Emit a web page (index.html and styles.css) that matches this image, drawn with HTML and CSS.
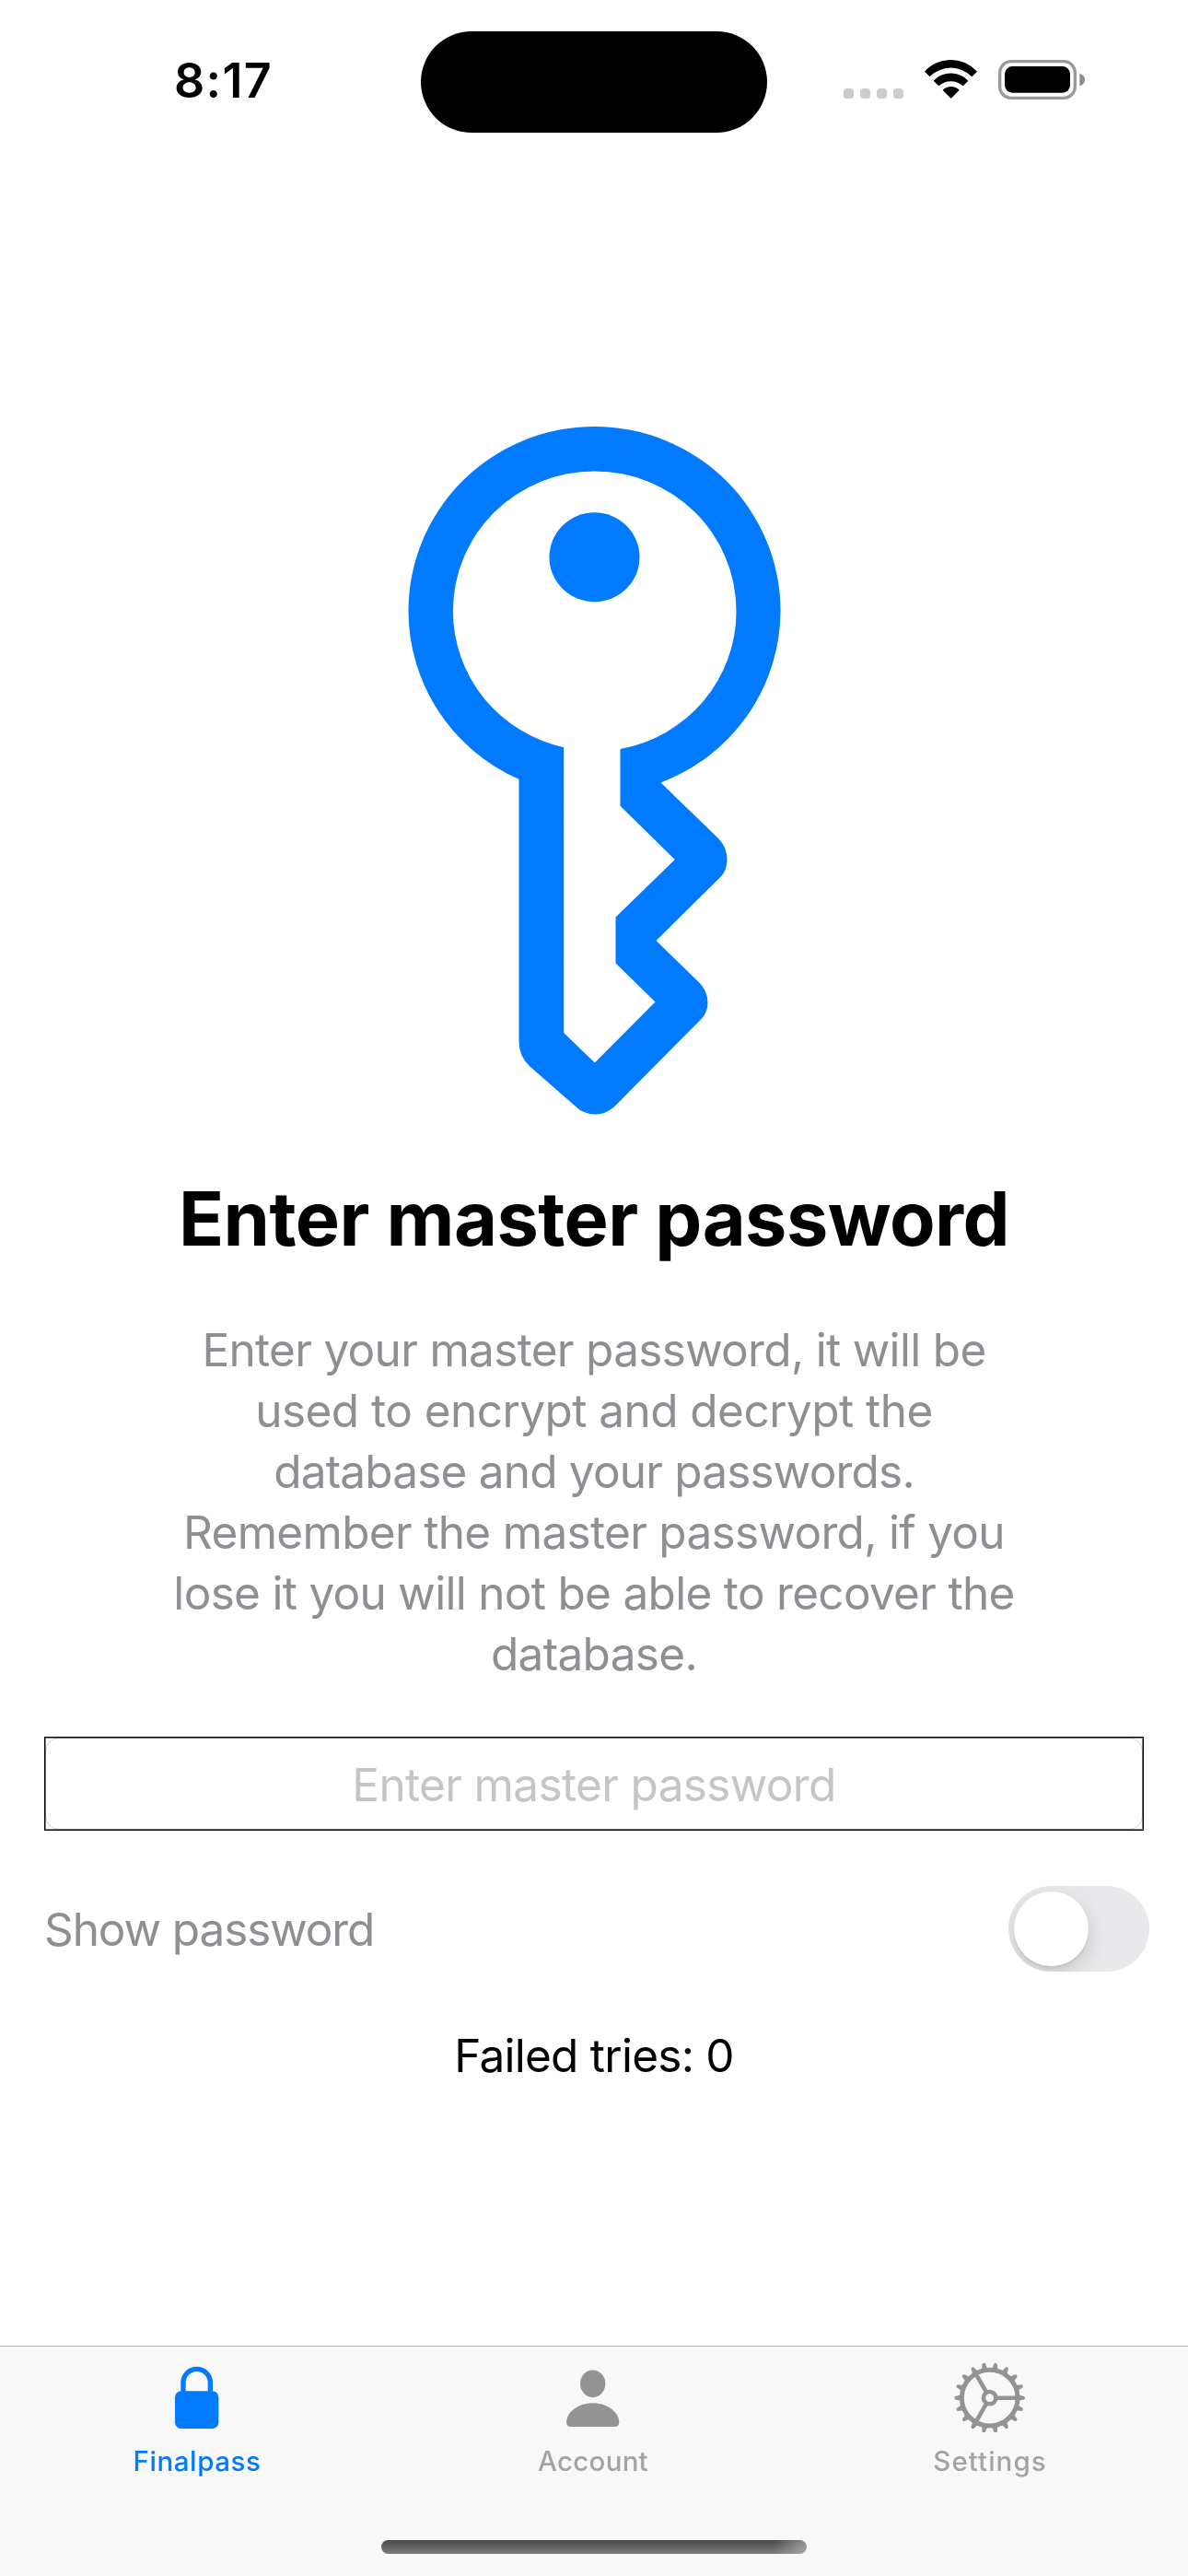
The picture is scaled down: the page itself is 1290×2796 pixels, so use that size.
FILE: index.html
```
<!DOCTYPE html>
<html lang="en">
<head>
<meta charset="utf-8">
<title>Finalpass</title>
<link rel="stylesheet" href="styles.css">
</head>
<body>
<header class="status">
  <div class="status-time">8:17</div>
  <div class="island"></div>
  <div class="status-icons">
    <div class="signal"><i></i><i></i><i></i><i></i></div>
    <svg class="wifi" viewBox="372 75 171 129">
      <path d="M372 113A115 115 0 0 1 543 113L526 130A95 95 0 0 0 389 130Z"/>
      <path d="M401 143A77 77 0 0 1 514 143L497 160A58 58 0 0 0 418 160Z"/>
      <path d="M431 173A38 38 0 0 1 485 173L458 201Z"/>
    </svg>
    <svg class="battery" viewBox="612 75 285 129">
      <rect class="battery-shell" x="617" y="80" width="245" height="119" rx="37"/>
      <rect x="633" y="96" width="213" height="86" rx="25"/>
      <path class="battery-nub" d="M877 119C900 126 900 153 877 160Z"/>
    </svg>
  </div>
</header>

<main class="content">
  <svg class="key" viewBox="442.5 463 405 748">
    <path d="M563 845.8A202 200 0 0 1 443 663A202 200 0 0 1 645 463A202 200 0 0 1 847 663A202 200 0 0 1 717 849.5L780 910.4Q789 920 789 933Q789 944 782.7 951L712 1021L758.7 1066.5Q768 1076 768 1088.5Q768 1099 760 1107L666 1201.7Q657 1209.4 646 1209.4Q633 1209.4 624.3 1200.7L574 1156.8Q563 1146 563 1130ZM611.7 811.2V1121L645.3 1153.5L711 1087.4L668 1045.6V995.6L732.3 932.9L673 874.7V813A153.8 151.6 0 0 0 799 663A153.8 151.6 0 0 0 645.2 511.4A153.8 151.6 0 0 0 491.4 663A153.8 151.6 0 0 0 611.7 811.2Z"/>
    <ellipse cx="645" cy="604.8" rx="49" ry="48.5"/>
  </svg>
  <h1 class="title">Enter master password</h1>
  <p class="lead">
    <span>Enter your master password, it will be</span>
    <span class="line-loose">used to encrypt and decrypt the</span>
    <span class="line-tight">database and your passwords.</span>
    <span>Remember the master password, if you</span>
    <span class="line-snug">lose it you will not be able to recover the</span>
    <span>database.</span>
  </p>
  <div class="field"><div class="field-inner">Enter master password</div></div>
  <div class="option">
    <span class="option-label">Show password</span>
    <div class="switch"><div class="knob"></div></div>
  </div>
  <p class="tries">Failed tries: 0</p>
</main>

<footer class="bar">
  <nav class="tabs">
    <div class="tab active">
      <svg viewBox="165 90 240 240">
        <rect x="210" y="196" width="142" height="122" rx="20"/>
        <path class="shackle" d="M237 204V168a44 44 0 0 1 88 0V204"/>
      </svg>
      <span class="name-pass">Finalpass</span>
    </div>
    <div class="tab">
      <svg viewBox="135 90 240 240">
        <ellipse cx="251" cy="172" rx="41" ry="44.500"/>
        <path d="M180 312Q165 312 165 297C167 262 206 235 251 235S335 262 337 297Q337 312 322 312Z"/>
      </svg>
      <span class="name-account">Account</span>
    </div>
    <div class="tab">
      <svg viewBox="165 90 240 240">
        <defs>
          <path id="tooth" d="M374 204C381 209 384 211 394 212Q399 213 399 218Q399 223 394 224C384 225 381 227 374 232Z"/>
          <g id="teeth">
            <use href="#tooth"/>
            <use href="#tooth" transform="rotate(20 284 218)"/>
            <use href="#tooth" transform="rotate(40 284 218)"/>
            <use href="#tooth" transform="rotate(60 284 218)"/>
            <use href="#tooth" transform="rotate(80 284 218)"/>
            <use href="#tooth" transform="rotate(100 284 218)"/>
          </g>
        </defs>
        <use href="#teeth"/>
        <use href="#teeth" transform="rotate(120 284 218)"/>
        <use href="#teeth" transform="rotate(240 284 218)"/>
        <circle class="rim" cx="284" cy="218" r="91"/>
        <circle class="hub" cx="284" cy="218" r="20"/>
        <path class="spokes" d="M304 218H370M274 200.700L240 141.800M274 235.300L240 294.200"/>
      </svg>
      <span class="name-settings">Settings</span>
    </div>
  </nav>
  <div class="home"></div>
</footer>
</body>
</html>
```
FILE: styles.css
```
* { box-sizing: border-box; }

body {
  margin: 0;
  width: 1290px;
  height: 2796px;
  display: flex;
  flex-direction: column;
  background: #fff;
  color: #000;
  font-family: Inter, "Liberation Sans", sans-serif;
  font-size: 49.5px;
  line-height: 66px;
  letter-spacing: -0.68px;
  overflow: hidden;
}

svg { display: block; }
h1, p { margin: 0; }

/* Status bar */
.status {
  height: 463px;
  padding: 33.5px 111px 0 189px;
  display: flex;
  align-items: flex-start;
}
.status-time {
  width: 268px;
  padding-top: 21.5px;
  font-size: 52px;
  font-weight: 600;
  letter-spacing: 1.3px;
}
.island {
  width: 376px;
  height: 110.5px;
  border-radius: 56px;
  background: #000;
}
.status-icons {
  margin-left: 83px;
  padding-top: 31.5px;
  display: flex;
}
.signal {
  width: 88px;
  padding-top: 31px;
  display: flex;
  gap: 7px;
}
.signal i {
  width: 11px;
  height: 11px;
  border-radius: 3.5px;
  background: #ccc;
}
.wifi { width: 57px; height: 43px; }
.battery { width: 95px; height: 43px; margin-left: 23px; }
.battery-shell { fill: none; stroke: #999; stroke-width: 10; }
.battery-nub { fill: #8c8c8c; }

/* Unlock form */
.content {
  height: 2083px;
  display: flex;
  flex-direction: column;
  align-items: center;
}
.key { width: 405px; height: 748px; fill: #007aff; }
.title {
  margin-top: 62px;
  font-size: 81px;
  line-height: 100px;
  font-weight: 700;
  letter-spacing: -0.55px;
}
.lead {
  margin-top: 59px;
  display: flex;
  flex-direction: column;
  align-items: center;
  color: #8e8e93;
  white-space: nowrap;
}
.line-loose { letter-spacing: -0.55px; }
.line-tight { letter-spacing: -0.8px; }
.line-snug { letter-spacing: -0.7px; }
.field {
  width: 1194px;
  height: 102px;
  margin-top: 57px;
  border: 1px solid #000;
  box-shadow: inset 0 0 0 1px #808080;
}
.field-inner {
  height: 100px;
  padding-top: 17px;
  border: 1px solid #d0d0d0;
  border-radius: 15px;
  color: #c5c5c7;
  text-align: center;
  letter-spacing: -0.64px;
  mix-blend-mode: multiply;
}
.option {
  width: 1200px;
  height: 93px;
  margin: 60px 0 0 6px;
  display: flex;
  align-items: center;
  justify-content: space-between;
}
.option-label { color: #8e8e93; letter-spacing: -1.1px; }
.switch {
  width: 153px;
  height: 93px;
  padding: 6px;
  border-radius: 47px;
  background: #e9e9eb;
  overflow: hidden;
}
.knob {
  width: 81px;
  height: 81px;
  border-radius: 50%;
  background: #fff;
  box-shadow: 0 9px 24px rgba(0, 0, 0, 0.15), 0 3px 3px rgba(0, 0, 0, 0.06);
}
.tries { margin-top: 58px; letter-spacing: -0.75px; }

/* Tab bar */
.bar {
  height: 250px;
  padding-top: 13px;
  border-top: 1px solid #b2b2b2;
  background: #f8f8f8;
}
.tabs {
  height: 197px;
  display: grid;
  grid-template-columns: repeat(3, 1fr);
}
.tab {
  display: flex;
  flex-direction: column;
  align-items: center;
  gap: 13px;
  color: #a3a4a2;
  font-size: 29.5px;
  line-height: 36px;
  font-weight: 500;
}
.tab svg { width: 80px; height: 80px; fill: #929491; }
.tab span { padding-right: 2px; }
.active { color: #007aff; }
.active svg { fill: #007aff; }
.shackle { fill: none; stroke: #007aff; stroke-width: 16; }
.rim { fill: none; stroke: #929491; stroke-width: 15; }
.hub, .spokes { fill: none; stroke: #929491; stroke-width: 13.5; }
.tab .name-pass { letter-spacing: 0.6px; }
.tab .name-account { letter-spacing: 0.25px; }
.tab .name-settings { letter-spacing: 1.05px; padding-right: 0; }
.home {
  width: 462px;
  height: 15px;
  margin: 0 auto;
  border-radius: 8px;
  background:
    linear-gradient(100deg, transparent 92%, rgba(190, 190, 190, 0.65)),
    linear-gradient(#484848, #7c7c7c);
}
```
